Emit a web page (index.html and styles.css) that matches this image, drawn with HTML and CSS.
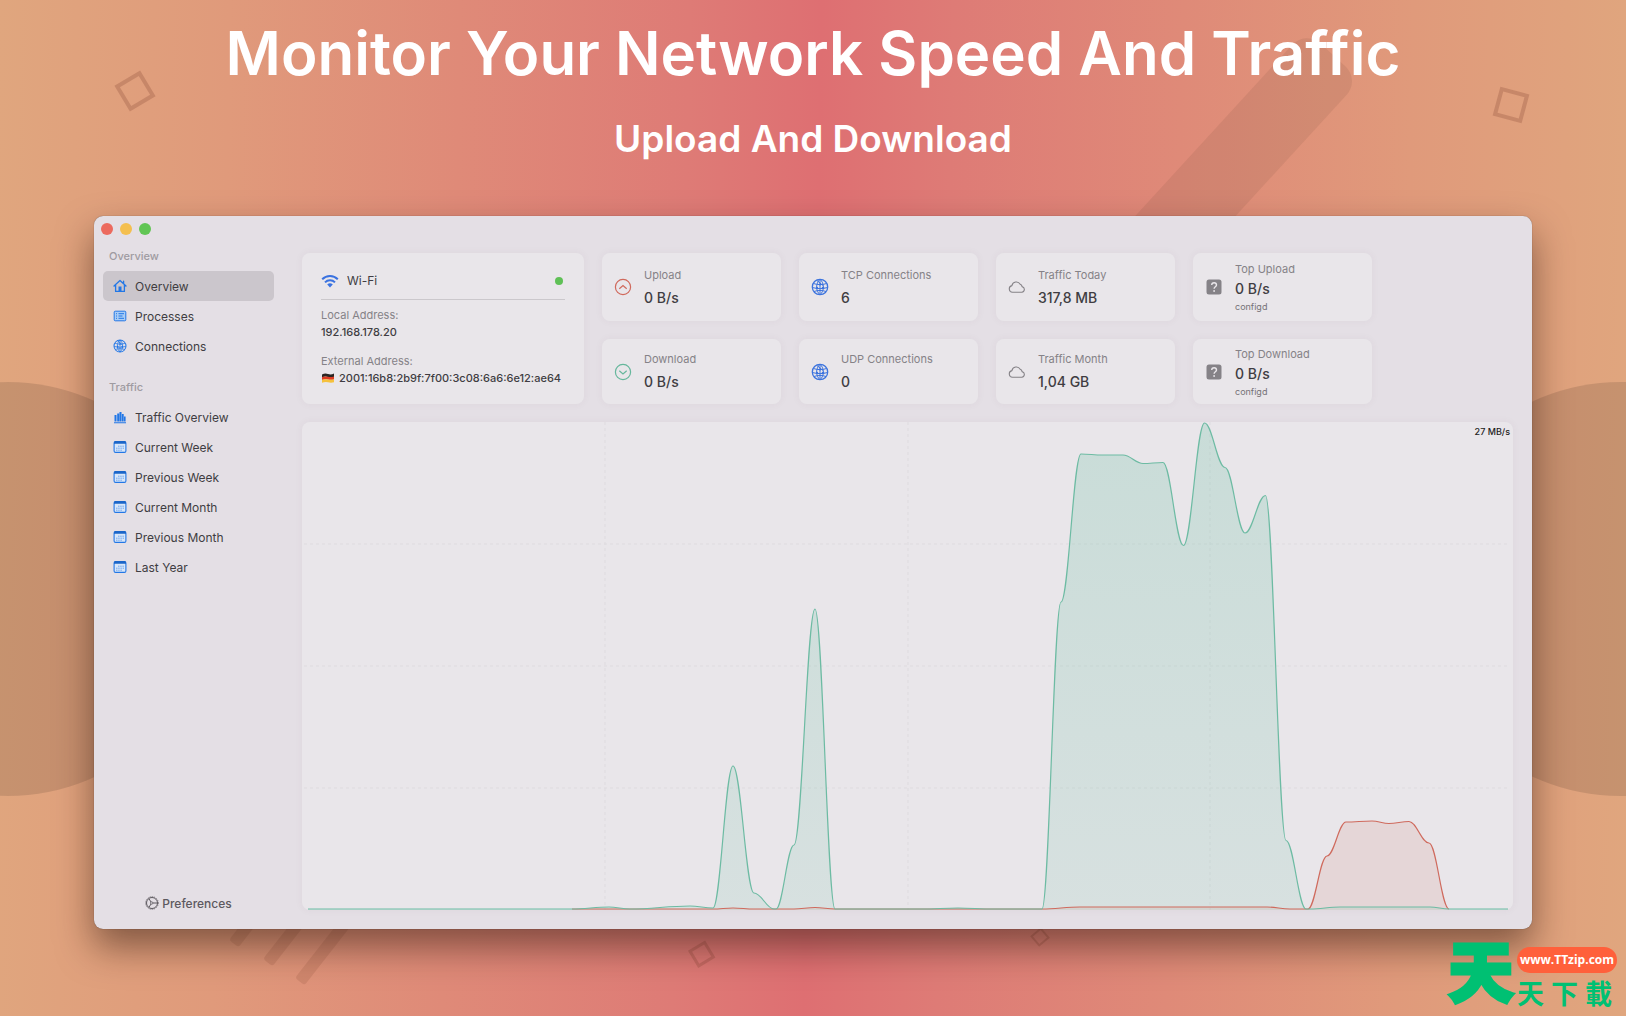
FILE: index.html
```html
<!DOCTYPE html>
<html lang="en">
<head>
<meta charset="utf-8">
<title>Monitor Your Network Speed And Traffic</title>
<link rel="stylesheet" href="styles.css">
</head>
<body>
<svg class="backdrop" viewBox="0 0 1626 1016" preserveAspectRatio="xMidYMid slice" aria-hidden="true">
  <g fill="#000" fill-opacity=".115">
    <circle cx="8" cy="589" r="207"/>
    <circle cx="1620" cy="589" r="207"/>
  </g>
  <rect class="shade soft" x="-37" y="0" width="74" height="340" rx="20" transform="translate(1333 55) rotate(42.5)"/>
  <g class="outline">
    <rect x="-13" y="-13" width="26" height="26" stroke-width="4" transform="translate(135 91) rotate(-31)"/>
    <rect x="-13" y="-13" width="26" height="26" stroke-width="4" transform="translate(1511 105) rotate(15)"/>
    <rect x="-8" y="-8" width="17" height="17" stroke-width="3" transform="translate(701 954) rotate(-31)"/>
    <rect x="-6" y="-6" width="12" height="12" stroke-width="2" transform="translate(1040 937) rotate(-40)"/>
  </g>
  <g class="shade">
    <rect x="-6" y="-60" width="12" height="62" rx="3" transform="translate(235 942) rotate(38)"/>
    <rect x="-6" y="-80" width="12" height="82" rx="3" transform="translate(269 961) rotate(38)"/>
    <rect x="-6" y="-90" width="12" height="92" rx="3" transform="translate(301 980) rotate(38)"/>
  </g>
</svg>

<svg class="sprite" aria-hidden="true">
  <symbol id="i-home" viewBox="0 0 14 14"><path d="M1 7 7 1.5 13 7M2.6 6v6.4h8.8V6M10.6 4.400V2.200" fill="none" stroke="currentColor" stroke-width="1.300" stroke-linejoin="round" stroke-linecap="round"/><path d="M5.500 7.500h3v5h-3z" fill="currentColor"/></symbol>
  <symbol id="i-list" viewBox="0 0 14 14"><rect x="1.200" y="2.200" width="11.600" height="9.600" rx="1" fill="#a9cdf6" stroke="currentColor" stroke-width="1"/><path d="M3 4.700h1M3 7h1M3 9.300h1M5.500 4.700H11M5.500 7H9.500M5.500 9.300H11" stroke="currentColor"/></symbol>
  <symbol id="i-globe" viewBox="0 0 18 18"><g fill="none" stroke="currentColor"><circle cx="9" cy="9" r="7.700" stroke-width="1.300"/><path d="M2.500 5.500c4 1.500 9 1.500 13 0M1.500 9.500c5 1.500 10 1.500 15 0M3 13.500c4-1.400 8-1.400 12 0M9 1.300v15.400M9 1.300C4.500 5 4.500 13 9 16.700M9 1.300c4.500 3.700 4.500 11.700 0 15.400M6 2.500l6 5" stroke-width="1"/></g><g fill="currentColor"><circle cx="6" cy="10" r="1.200"/><circle cx="12" cy="10" r="1.300"/><circle cx="9" cy="6.500" r="1"/></g></symbol>
  <symbol id="i-bars" viewBox="0 0 14 14"><path d="M1 12.200h12v1H1zM1.500 5h2v6.500h-2zM4.200 3.500h2v8h-2zM6.500 2h2v9.500h-2zM8.900 4h1.800v7.500H8.900zM11 6.500h1.600v5H11z" fill="currentColor"/></symbol>
  <symbol id="i-cal" viewBox="0 0 14 14"><rect x="1.100" y="1.600" width="11.800" height="10.800" rx="1.500" fill="#d8e6f8" stroke="currentColor" stroke-width="1.100"/><path d="M1 2.500Q1 1 2.500 1h9Q13 1 13 2.500v1.200H1z" fill="#1a65c9"/><path d="M5 6.200h6M3 8.200h8M3 10.200h6" stroke="#6fa6ee" stroke-dasharray="1.500 .7"/></symbol>
  <symbol id="i-cloud" viewBox="0 0 18 18"><path d="M4.500 14.300a3.400 3.400 0 0 1-.6-6.700A4.500 4.500 0 0 1 12.200 6.200a3 3 0 0 1 1.900 2.400 2.900 2.900 0 0 1-.3 5.700z" fill="none" stroke="currentColor" stroke-width="1.100"/></symbol>
  <symbol id="i-unknown" viewBox="0 0 18 18"><rect x="1.500" y="1.500" width="15" height="15" rx="2.500" fill="currentColor"/><path d="M6.700 7c0-3 4.800-3 4.800 0 0 1.700-2.400 1.700-2.400 3.700" fill="none" stroke="#e9e6ea" stroke-width="1.400"/><circle cx="9.100" cy="13" r=".9" fill="#e9e6ea"/></symbol>
</svg>

<header class="hero">
  <h1>Monitor Your Network Speed And Traffic</h1>
  <p>Upload And Download</p>
</header>

<div class="window">
  <aside class="sidebar">
    <div class="lights"><button class="red" aria-label="Close"></button><button class="yellow" aria-label="Minimize"></button><button class="green" aria-label="Zoom"></button></div>
    <nav>
      <h2>Overview</h2>
      <a class="active" href="#overview"><svg><use href="#i-home"/></svg>Overview</a>
      <a href="#processes"><svg><use href="#i-list"/></svg>Processes</a>
      <a href="#connections"><svg><use href="#i-globe"/></svg>Connections</a>
    </nav>
    <nav>
      <h2>Traffic</h2>
      <a href="#traffic"><svg><use href="#i-bars"/></svg>Traffic Overview</a>
      <a href="#week"><svg><use href="#i-cal"/></svg>Current Week</a>
      <a href="#prev-week"><svg><use href="#i-cal"/></svg>Previous Week</a>
      <a href="#month"><svg><use href="#i-cal"/></svg>Current Month</a>
      <a href="#prev-month"><svg><use href="#i-cal"/></svg>Previous Month</a>
      <a href="#year"><svg><use href="#i-cal"/></svg>Last Year</a>
    </nav>
    <button class="prefs"><svg viewBox="0 0 14 14"><circle cx="7" cy="7" r="5.500" fill="none" stroke="currentColor" stroke-width="1"/><circle cx="7" cy="7" r="6.300" fill="none" stroke="currentColor" stroke-width=".8" stroke-dasharray="1.200 1"/><path d="M6 6 4 2.800M6 8 4 11.200M8 7h4.500" stroke="currentColor" stroke-width="1"/><circle cx="6.700" cy="7" r="1.200" fill="none" stroke="currentColor" stroke-width=".8"/></svg>Preferences</button>
  </aside>

  <main>
    <div class="cards">
      <section class="card network">
        <div class="network-name">
          <svg viewBox="0 0 18 14"><g fill="none" stroke="#3a72e0" stroke-width="2"><path d="M1.200 5.300a11 11 0 0 1 15.600 0"/><path d="M4 8.400a7 7 0 0 1 10 0"/></g><path d="M6.200 10.600a4 4 0 0 1 5.600 0L9 13.400z" fill="#3a72e0"/></svg>
          <span>Wi-Fi</span><i></i>
        </div>
        <dl>
          <dt>Local Address:</dt><dd>192.168.178.20</dd>
          <dt>External Address:</dt>
          <dd><svg viewBox="0 0 14 10"><path d="M1 1.500Q4 0 7 1t6-.5V4Q10 5 7 4T1 4.500z" fill="#2b2523"/><path d="M1 4q3-1 6-.3T13 3.500v3Q10 7 7 6.500T1 7z" fill="#dd3b22"/><path d="M1 6.800q3-1 6-.3t6-.2v3q-3 .7-6 0t-6 .5z" fill="#f5c13c"/></svg>2001:16b8:2b9f:7f00:3c08:6a6:6e12:ae64</dd>
        </dl>
      </section>
      <section class="card stat"><svg class="up" viewBox="0 0 18 18"><circle cx="9" cy="9" r="7.600"/><path d="m5.300 10.700 3.700-3.200 3.700 3.200"/></svg><div><h3>Upload</h3><strong>0 B/s</strong></div></section>
      <section class="card stat"><svg class="blue"><use href="#i-globe"/></svg><div><h3>TCP Connections</h3><strong>6</strong></div></section>
      <section class="card stat"><svg><use href="#i-cloud"/></svg><div><h3>Traffic Today</h3><strong>317,8 MB</strong></div></section>
      <section class="card stat top"><svg><use href="#i-unknown"/></svg><div><h3>Top Upload</h3><strong>0 B/s</strong><small>configd</small></div></section>
      <section class="card stat"><svg class="down" viewBox="0 0 18 18"><circle cx="9" cy="9" r="7.600"/><path d="m5.300 7.700 3.700 3.200 3.700-3.200"/></svg><div><h3>Download</h3><strong>0 B/s</strong></div></section>
      <section class="card stat"><svg class="blue"><use href="#i-globe"/></svg><div><h3>UDP Connections</h3><strong>0</strong></div></section>
      <section class="card stat"><svg><use href="#i-cloud"/></svg><div><h3>Traffic Month</h3><strong>1,04 GB</strong></div></section>
      <section class="card stat top"><svg><use href="#i-unknown"/></svg><div><h3>Top Download</h3><strong>0 B/s</strong><small>configd</small></div></section>
    </div>
    <section class="card chart">
      <svg viewBox="0 0 1211 488" preserveAspectRatio="none" role="img" aria-label="Upload and download speed">
        <defs><linearGradient id="fade" x1="0" y1="0" x2="0" y2="488" gradientUnits="userSpaceOnUse"><stop offset="0" stop-color="#72c2a7" stop-opacity=".27"/><stop offset="1" stop-color="#72c2a7" stop-opacity=".15"/></linearGradient></defs>
        <path class="grid" d="M2 122H1208M2 244H1208M2 366H1208M303 0V488M606 0V488M908 0V488"/>
        <path id="up-area" fill="#d0695c" fill-opacity=".13"/><path id="down-area" fill="url(#fade)"/>
        <path id="up-line" class="line" stroke="#cf6a5d"/><path id="down-line" class="line" stroke="#6dbba3"/>
      </svg>
      <span>27 MB/s</span>
    </section>
  </main>
</div>

<footer>
  <a class="brand" href="#download">
    <span class="mark">天</span>
    <span class="brand-side"><span class="pill">www.TTzip.com</span><span class="brand-name"><span>天</span><span>下</span><span>載</span></span></span>
  </a>
</footer>
<script src="app.js"></script>
</body>
</html>
```
FILE: styles.css
```css
* { box-sizing: border-box; margin: 0; }
body {
  min-height: 100vh;
  position: relative;
  overflow-x: hidden;
  font-family: Inter, "Liberation Sans", sans-serif;
  font-size: 12px;
  color: #403d42;
  background: linear-gradient(91deg, #e0a67e 0%, #e09a7b 14%, #df8a78 28%, #de7b76 42%, #de6f72 50%, #de7b76 58%, #df8a78 72%, #e09a7b 86%, #e0a67e 100%);
}
h1, h2, h3 { font-weight: inherit; font-size: inherit; }
a { color: inherit; text-decoration: none; }
button { border: 0; padding: 0; background: none; font: inherit; color: inherit; }
.sprite { position: absolute; width: 0; height: 0; }
.backdrop { position: absolute; inset: 0; width: 100%; height: 100%; }
.shade { fill: #7a3a2a; fill-opacity: .15; }
.soft { fill: #704a3a; fill-opacity: .12; }
.outline { fill: none; stroke: #7a3a2a; stroke-opacity: .24; }

.hero { position: relative; padding-top: 13px; text-align: center; color: #fff; }
.hero h1 { font-size: 60px; line-height: 80px; font-weight: 600; }
.hero p { margin-top: 22px; font-size: 37px; line-height: 48px; font-weight: 600; }

.window {
  position: relative;
  display: flex;
  margin: 53px 94px 0;
  background: #e4dfe5;
  border-radius: 9px;
  box-shadow: 0 0 1px rgba(0, 0, 0, .5), 0 18px 36px rgba(40, 20, 10, .5);
}
.sidebar { display: flex; flex-direction: column; width: 208px; padding: 7px 28px 11px 9px; }
.lights { display: flex; gap: 7px; height: 12px; margin: 0 0 14px -2px; }
.lights button { width: 12px; height: 12px; border-radius: 50%; }
.red { background: #ec6a5e; }
.yellow { background: #f4bf4f; }
.green { background: #61c554; }
nav { margin-bottom: 19px; }
nav h2 { padding-left: 6px; margin-bottom: 7px; font-size: 11px; line-height: 15px; font-weight: 500; color: #9f9ba1; }
nav a { display: flex; align-items: center; gap: 8px; height: 30px; padding-left: 10px; border-radius: 5px; }
nav a.active { background: #cbc6cc; }
nav svg { width: 14px; height: 14px; color: #2277e6; }
.prefs { display: flex; align-items: center; justify-content: center; gap: 3px; height: 30px; margin-top: auto; font-weight: 500; color: #5d595f; }
.prefs svg { width: 14px; height: 14px; }

main { flex: 1; min-width: 0; padding: 37px 19px 19px 0; }
.cards { display: grid; grid-template-columns: 282px repeat(4, 179px); grid-template-rows: 68px 65px; gap: 18px; }
.card { background: #e9e6ea; border-radius: 8px; box-shadow: 0 0 8px rgba(90, 60, 80, .05); }
.network { grid-row: span 2; padding: 18px 19px; }
.network-name { display: flex; align-items: center; gap: 8px; height: 29px; padding-bottom: 9px; border-bottom: 1px solid #cbc8cc; }
.network-name svg { width: 18px; height: 14px; }
.network-name i { width: 8px; height: 8px; margin: 0 2px 0 auto; border-radius: 50%; background: #5fc056; }
dl { padding-top: 7px; font-size: 11px; line-height: 18px; }
dt { line-height: 16px; color: #858287; }
dd { display: flex; align-items: center; gap: 4px; margin: 0 0 12px; font-weight: 500; white-space: nowrap; }
dd svg { width: 14px; height: 10px; flex: none; }
.stat { display: flex; align-items: center; gap: 12px; padding-left: 12px; }
.stat svg { width: 18px; height: 18px; color: #858287; }
.stat .blue { color: #3d74de; }
.stat .up, .stat .down { fill: none; stroke: #d0695c; stroke-width: 1.2; }
.stat .down { stroke: #66b79c; }
.stat div { display: grid; gap: 5px; }
.stat h3 { font-size: 11px; line-height: 16px; color: #858287; }
.stat strong { font-size: 14px; line-height: 20px; font-weight: 500; }
.stat small { font-size: 9px; line-height: 12px; color: #757277; }
.top div { gap: 2px; }
.chart { position: relative; margin-top: 18px; }
.chart svg { display: block; width: 100%; height: 488px; }
.chart span { position: absolute; top: 4px; right: 3px; font-size: 9px; line-height: 12px; font-weight: 500; color: #222; }
.grid { fill: none; stroke: #dedbdf; stroke-dasharray: 3 3; }
.line { fill: none; stroke-width: 1.2; vector-effect: non-scaling-stroke; }

footer { position: relative; display: flex; justify-content: flex-end; padding: 6px 9px 0 0; }
.brand { display: flex; gap: 3px; font-family: "Noto Sans CJK TC", sans-serif; font-weight: 900; color: #00c073; }
.mark { font-size: 66px; line-height: 66px; -webkit-text-stroke: 3px #00c073; }
.brand-side { display: flex; flex-direction: column; padding-top: 12px; }
.pill { width: 100px; height: 26px; border-radius: 13px; background: #ff603b; color: #fff; font: 700 12px/26px "Open Sans", sans-serif; text-align: center; }
.brand-name { display: flex; gap: 7px; font-size: 27px; line-height: 40px; font-weight: 700; }
```
FILE: app.js
```javascript
// Samples as [x, y] in chart units; y grows downwards and 487 is zero traffic.
const download = [
  [6, 487], [270, 487], [307, 485], [328, 487], [388, 484], [411, 486], [431, 344], [452, 471],
  [472, 487], [474, 487], [492, 423], [513, 187], [533, 487], [620, 487], [656, 486],
  [690, 487], [740, 487], [759, 180], [779, 32], [800, 33], [821, 33], [841, 41.5], [861, 40.5], [881.5, 123.5],
  [902.5, 1], [923, 45.5], [943, 111], [963.5, 73.5], [984, 418.5], [1004, 487], [1008, 487],
  [1038, 485], [1128, 485], [1147, 487], [1206, 487]
];
const upload = [
  [270, 487], [411, 487], [431, 486], [452, 487], [492, 487], [513, 485.5], [533, 487], [740, 487],
  [778, 485], [965, 485], [988, 487], [1006, 487], [1025, 434], [1044, 400],
  [1070, 399], [1087, 401.5], [1107, 399.5], [1127, 421], [1147, 487]
];

function curve(points) {
  let d = `M${points[0]}`;
  for (let i = 1; i < points.length; i++) {
    const [x0, y0] = points[i - 1];
    const [x1, y1] = points[i];
    const dx = (x1 - x0) * 0.38;
    d += `C${x0 + dx},${y0} ${x1 - dx},${y1} ${x1},${y1}`;
  }
  return d;
}

function draw(name, points) {
  const d = curve(points);
  document.getElementById(name + "-line").setAttribute("d", d);
  document.getElementById(name + "-area").setAttribute("d", `${d}V488H${points[0][0]}Z`);
}

draw("up", upload);
draw("down", download);
```
